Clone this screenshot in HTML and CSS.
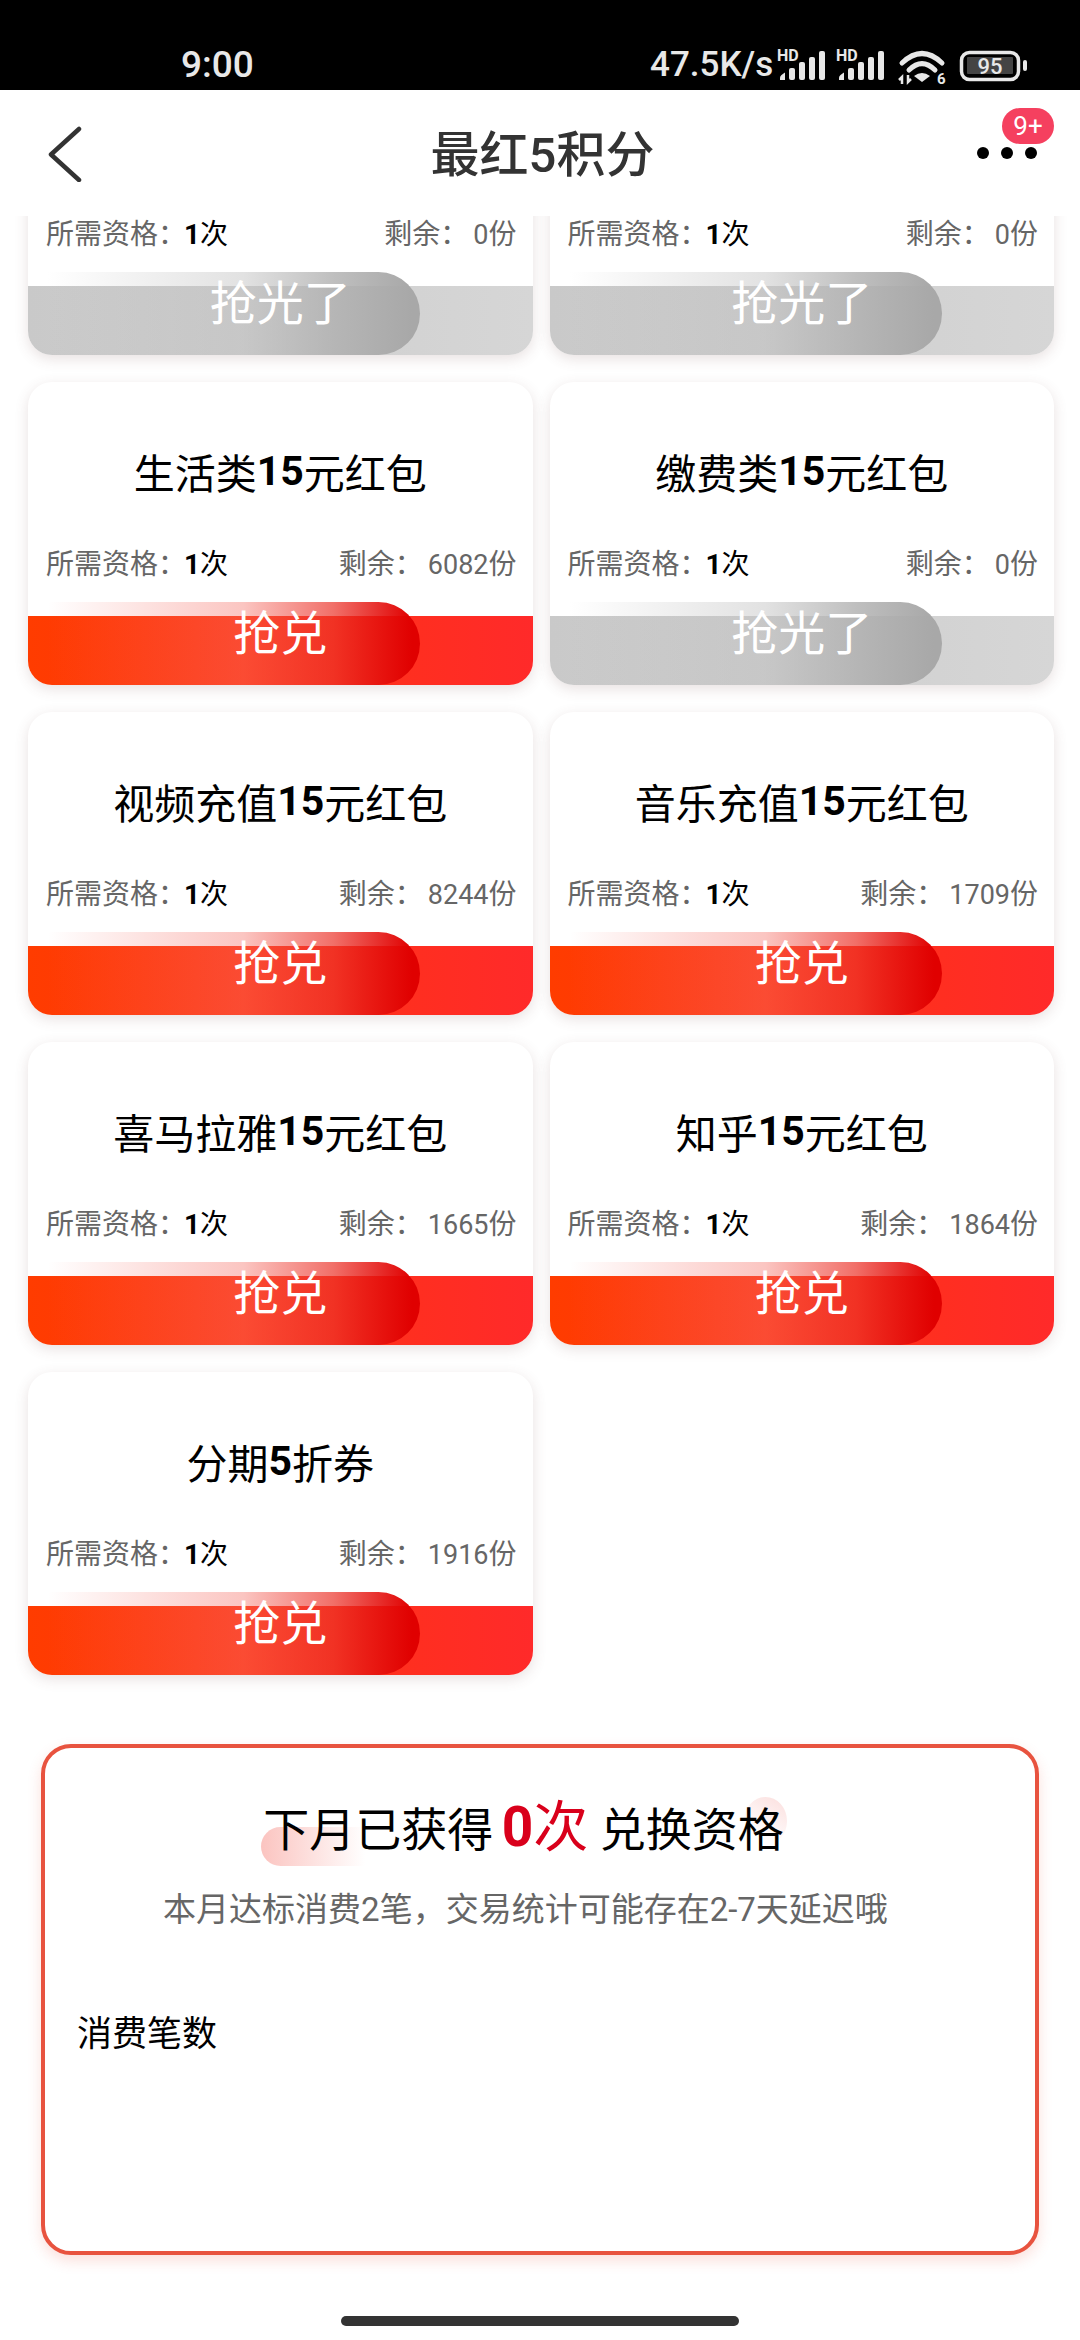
FILE: index.html
```html
<!DOCTYPE html>
<html lang="zh-CN">
<head>
  <meta charset="UTF-8">
  <meta name="viewport" content="width=device-width, initial-scale=1.0">
  <title>最红5积分</title>
  <link rel="stylesheet" href="styles.css">
</head>
<body>
  <!-- Status bar -->
  <div class="status-bar">
    <span class="status-time">9:00</span>
    <span class="status-speed">47.5K/s</span>
    <svg class="icon-signal" viewBox="0 0 50 32">
      <text x="-1" y="11" class="icon-text-hd">HD</text>
      <path d="M2 30v-2.500q0-2 5-5v7.500z" class="bar-fill"/>
      <rect x="11" y="18" width="6" height="12" rx="2" class="bar-fill"/>
      <rect x="21" y="12" width="6" height="18" rx="2" class="bar-fill"/>
      <rect x="31" y="7" width="6" height="23" rx="2" class="bar-fill"/>
      <rect x="41" y="1" width="6" height="29" rx="2" class="bar-fill"/>
    </svg>
    <svg class="icon-signal icon-signal-second" viewBox="0 0 50 32">
      <text x="-1" y="11" class="icon-text-hd">HD</text>
      <path d="M2 30v-2.500q0-2 5-5v7.500z" class="bar-fill"/>
      <rect x="11" y="18" width="6" height="12" rx="2" class="bar-fill"/>
      <rect x="21" y="12" width="6" height="18" rx="2" class="bar-fill"/>
      <rect x="31" y="7" width="6" height="23" rx="2" class="bar-fill"/>
      <rect x="41" y="1" width="6" height="29" rx="2" class="bar-fill"/>
    </svg>
    <svg class="icon-wifi" viewBox="0 0 48 36">
      <path d="M3 14Q23-5 43 14" class="wifi-arc"/>
      <path d="M10 21Q23 8 36 21" class="wifi-arc"/>
      <path d="M23 33l-8-6q8-6 16 0z" class="bar-fill"/>
      <path d="M3 35v-7l-3 3M9 26v7l3-3" class="wifi-arrow"/>
      <text x="38" y="35" class="icon-text-six">6</text>
    </svg>
    <svg class="icon-battery" viewBox="0 0 68 30">
      <rect x="1.500" y="1.500" width="57" height="27" rx="8" class="battery-shell"/>
      <rect x="7" y="6" width="46" height="17" rx="1" class="battery-fill"/>
      <text x="30" y="23" class="battery-text">95</text>
      <rect x="63" y="9" width="4" height="11" rx="2" class="bar-fill"/>
    </svg>
  </div>

  <!-- Header -->
  <header class="top-bar">
    <svg class="back-icon" viewBox="0 0 34 56">
      <path d="M31 3 3 28.500 31 54"/>
    </svg>
    <h1 class="page-title">最红5积分</h1>
    <div class="more-menu">
      <span class="dot"></span><span class="dot"></span><span class="dot"></span>
      <span class="more-badge">9+</span>
    </div>
  </header>

  <main class="content">
    <div class="card-grid">
      <div class="card sold-out">
        <div class="card-title"></div>
        <div class="card-meta"><span>所需资格&#xFF1A;<b>1</b><em>次</em></span><span class="stock">剩余&#xFF1A;<i>0</i>份</span></div>
        <div class="card-action"><div class="action-bar"><span class="action-label">抢光了</span></div><div class="action-pill"></div></div>
      </div>
      <div class="card sold-out">
        <div class="card-title"></div>
        <div class="card-meta"><span>所需资格&#xFF1A;<b>1</b><em>次</em></span><span class="stock">剩余&#xFF1A;<i>0</i>份</span></div>
        <div class="card-action"><div class="action-bar"><span class="action-label">抢光了</span></div><div class="action-pill"></div></div>
      </div>
      <div class="card">
        <div class="card-title">生活类<b>15</b>元红包</div>
        <div class="card-meta"><span>所需资格&#xFF1A;<b>1</b><em>次</em></span><span class="stock">剩余&#xFF1A;<i>6082</i>份</span></div>
        <div class="card-action"><div class="action-bar"><span class="action-label">抢兑</span></div><div class="action-pill"></div></div>
      </div>
      <div class="card sold-out">
        <div class="card-title">缴费类<b>15</b>元红包</div>
        <div class="card-meta"><span>所需资格&#xFF1A;<b>1</b><em>次</em></span><span class="stock">剩余&#xFF1A;<i>0</i>份</span></div>
        <div class="card-action"><div class="action-bar"><span class="action-label">抢光了</span></div><div class="action-pill"></div></div>
      </div>
      <div class="card">
        <div class="card-title">视频充值<b>15</b>元红包</div>
        <div class="card-meta"><span>所需资格&#xFF1A;<b>1</b><em>次</em></span><span class="stock">剩余&#xFF1A;<i>8244</i>份</span></div>
        <div class="card-action"><div class="action-bar"><span class="action-label">抢兑</span></div><div class="action-pill"></div></div>
      </div>
      <div class="card">
        <div class="card-title">音乐充值<b>15</b>元红包</div>
        <div class="card-meta"><span>所需资格&#xFF1A;<b>1</b><em>次</em></span><span class="stock">剩余&#xFF1A;<i>1709</i>份</span></div>
        <div class="card-action"><div class="action-bar"><span class="action-label">抢兑</span></div><div class="action-pill"></div></div>
      </div>
      <div class="card">
        <div class="card-title">喜马拉雅<b>15</b>元红包</div>
        <div class="card-meta"><span>所需资格&#xFF1A;<b>1</b><em>次</em></span><span class="stock">剩余&#xFF1A;<i>1665</i>份</span></div>
        <div class="card-action"><div class="action-bar"><span class="action-label">抢兑</span></div><div class="action-pill"></div></div>
      </div>
      <div class="card">
        <div class="card-title">知乎<b>15</b>元红包</div>
        <div class="card-meta"><span>所需资格&#xFF1A;<b>1</b><em>次</em></span><span class="stock">剩余&#xFF1A;<i>1864</i>份</span></div>
        <div class="card-action"><div class="action-bar"><span class="action-label">抢兑</span></div><div class="action-pill"></div></div>
      </div>
      <div class="card">
        <div class="card-title">分期<b>5</b>折券</div>
        <div class="card-meta"><span>所需资格&#xFF1A;<b>1</b><em>次</em></span><span class="stock">剩余&#xFF1A;<i>1916</i>份</span></div>
        <div class="card-action"><div class="action-bar"><span class="action-label">抢兑</span></div><div class="action-pill"></div></div>
      </div>
    </div>

    <!-- Next month summary -->
    <section class="summary">
      <h2 class="summary-title">
        <span class="summary-heading">下月已获得 <strong><b>0</b>次</strong> 兑换资格<span class="blob-left"></span><span class="blob-right"></span></span>
      </h2>
      <p class="summary-note">本月达标消费2笔&#xFF0C;交易统计可能存在2-7天延迟哦</p>
      <p class="summary-label">消费笔数</p>
    </section>
  </main>

  <footer class="home-area"><div class="home-indicator"></div></footer>
</body>
</html>
```

FILE: styles.css
```css
/* Global Styles */
* {
  box-sizing: border-box;
}

body {
  font-family: Roboto, "Noto Sans CJK SC", sans-serif;
  margin: 0;
  width: 1080px;
  height: 2340px;
  display: flex;
  flex-direction: column;
  overflow: hidden;
  background-color: #fff;
  color: #000;
}

/* Status bar */
.status-bar {
  flex: none;
  height: 90px;
  background-color: #000;
  color: #e8e8e8;
  display: flex;
  align-items: flex-start;
  padding: 47px 0 0 181px;
}

.status-time {
  flex: none;
  width: 90px;
  font-size: 37px;
  font-weight: 500;
  line-height: 36px;
}

.status-speed {
  flex: none;
  font-size: 35px;
  font-weight: 500;
  line-height: 36px;
  margin-left: 379px;
}

.icon-signal {
  flex: none;
  width: 50px;
  height: 32px;
  margin: 3px 0 0 5px;
  overflow: visible;
}

.icon-signal-second {
  margin-left: 9px;
}

.icon-wifi {
  flex: none;
  width: 48px;
  height: 36px;
  margin: 2px 0 0 12px;
  overflow: visible;
}

.icon-battery {
  flex: none;
  width: 68px;
  height: 30px;
  margin: 4px 0 0 13px;
  overflow: visible;
}

.bar-fill {
  fill: #e8e8e8;
}

.wifi-arc {
  fill: none;
  stroke: #e8e8e8;
  stroke-width: 5;
  stroke-linecap: round;
}

.wifi-arrow {
  fill: none;
  stroke: #e8e8e8;
  stroke-width: 2.500;
}

.icon-text-hd {
  font-size: 16px;
  font-weight: 700;
  fill: #e8e8e8;
}

.icon-text-six {
  font-size: 15px;
  font-weight: 700;
  fill: #e8e8e8;
}

.battery-shell {
  fill: none;
  stroke: #e8e8e8;
  stroke-width: 3.500;
}

.battery-fill {
  fill: #444;
}

.battery-text {
  font-size: 22px;
  font-weight: 500;
  fill: #e8e8e8;
  text-anchor: middle;
}

/* Header */
.top-bar {
  flex: none;
  height: 126px;
  background-color: #fff;
  display: grid;
  grid-template-columns: 1fr auto 1fr;
  align-items: center;
  padding: 0 43px 0 48px;
  position: relative;
  z-index: 2;
}

.back-icon {
  width: 34px;
  height: 56px;
  margin-top: 2px;
}

.back-icon path {
  fill: none;
  stroke: #333;
  stroke-width: 4.500;
  stroke-linecap: round;
  stroke-linejoin: round;
}

.page-title {
  margin: 6px 0 0;
  font-size: 49px;
  font-weight: 500;
  line-height: 60px;
  color: #333;
}

.more-menu {
  justify-self: end;
  display: flex;
  gap: 12px;
  position: relative;
}

.dot {
  width: 12px;
  height: 12px;
  border-radius: 50%;
  background-color: #000;
}

.more-badge {
  position: absolute;
  right: -17px;
  bottom: 15px;
  width: 52px;
  height: 36px;
  border-radius: 18px;
  background-color: #f5405f;
  color: #fff;
  font-size: 26px;
  line-height: 36px;
  text-align: center;
}

/* Card grid, scrolled up under the header */
.content {
  flex: 1;
  min-height: 0;
  overflow: hidden;
}

.card-grid {
  display: grid;
  grid-template-columns: 1fr 1fr;
  gap: 27px 17px;
  padding: 0 26px 0 28px;
  margin-top: -164px;
}

.card {
  height: 303px;
  display: flex;
  flex-direction: column;
  background-color: #fff;
  border-radius: 24px;
  box-shadow: 0 4px 14px rgba(110, 70, 70, 0.16);
  overflow: hidden;
}

.card-title {
  flex: none;
  height: 160px;
  padding-top: 18px;
  display: flex;
  align-items: center;
  justify-content: center;
  font-size: 41px;
}

.card-title b {
  font-weight: 700;
}

.card-meta {
  flex: none;
  height: 40px;
  margin-bottom: 20px;
  display: flex;
  justify-content: space-between;
  align-items: center;
  padding: 0 16px 0 18px;
  font-size: 28px;
  color: #666;
}

.card-meta b {
  color: #000;
  font-weight: 700;
  margin-left: -2px;
}

.card-meta em {
  color: #000;
  font-style: normal;
}

.stock i {
  font-size: 27px;
  font-style: normal;
  margin-left: 5px;
}

.card-action {
  position: relative;
  flex: none;
  height: 83px;
  padding-top: 14px;
}

.action-bar {
  height: 69px;
  background: linear-gradient(90deg, #ff3c00, #ff2a2a);
  color: #fff;
  font-size: 47px;
  line-height: 36px;
  text-align: center;
}

.action-pill {
  position: absolute;
  left: 0;
  top: 0;
  width: 392px;
  height: 83px;
  border-radius: 0 42px 42px 0;
  background: linear-gradient(90deg, rgba(245, 110, 100, 0) 5%, rgba(245, 110, 100, 0.4) 55%, rgba(235, 50, 40, 0.7) 78%, #e00000 98%);
}

.action-label {
  position: relative;
  z-index: 1;
}

.sold-out .action-bar {
  background: linear-gradient(90deg, #c9c9c9, #d6d6d6);
}

.sold-out .action-pill {
  background: linear-gradient(90deg, rgba(190, 190, 190, 0) 5%, rgba(190, 190, 190, 0.45) 55%, rgba(175, 175, 175, 0.8) 78%, #a8a8a8 98%);
}

/* Summary panel */
.summary {
  height: 511px;
  margin: 69px 41px 0;
  padding: 52px 61px 0 32px;
  border: 4px solid #e8533f;
  border-radius: 30px;
  background-color: #fff;
  box-shadow: 0 6px 14px rgba(232, 83, 63, 0.18);
}

.summary-title {
  margin: 0;
  height: 60px;
  text-align: center;
  font-size: 46px;
  font-weight: 400;
  line-height: 60px;
}

.summary-heading {
  position: relative;
  display: inline-block;
  isolation: isolate;
  margin-right: 4px;
}

.summary-heading strong {
  color: #d9001b;
  font-size: 55px;
  font-weight: 400;
  line-height: 1;
  margin-left: -3px;
}

.summary-heading strong b {
  font-weight: 700;
}

.blob-left {
  position: absolute;
  left: -2px;
  top: 27px;
  width: 104px;
  height: 39px;
  border-radius: 20px 0 0 20px;
  background: linear-gradient(90deg, #fbc4c0, rgba(255, 235, 230, 0));
  z-index: -1;
}

.blob-right {
  position: absolute;
  right: -3px;
  top: -3px;
  width: 43px;
  height: 48px;
  border-radius: 50%;
  background: linear-gradient(30deg, rgba(255, 255, 255, 0) 25%, #fbdedd);
  z-index: -1;
}

.summary-note {
  margin: 28px 0 0;
  text-align: center;
  font-size: 33px;
  line-height: 44px;
  color: #666;
}

.summary-label {
  margin: 81px 0 0;
  font-size: 35px;
  line-height: 44px;
}

/* Home indicator */
.home-area {
  flex: none;
  height: 40px;
  padding-top: 16px;
}

.home-indicator {
  width: 398px;
  height: 10px;
  margin: 0 auto;
  border-radius: 5px;
  background-color: #333;
}
```
